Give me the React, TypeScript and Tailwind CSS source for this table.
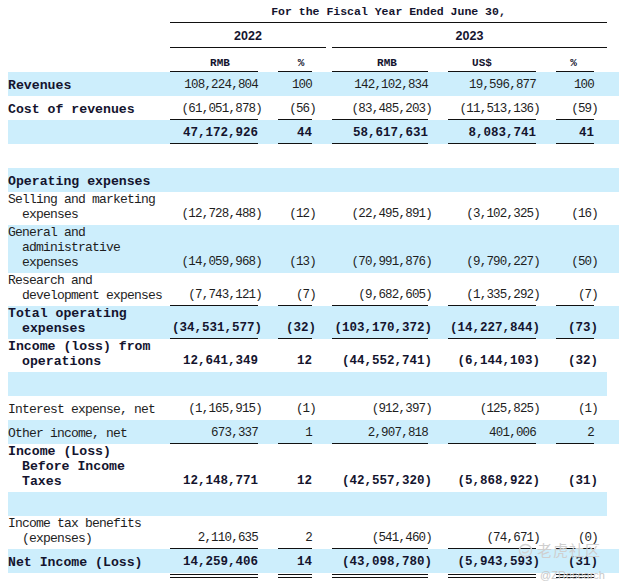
import React from "react";

type Row = {
  label?: string[];
  bold?: boolean;
  boldVals?: boolean;
  bg?: boolean;
  vals?: string[];
  line?: "single" | "double";
  blank?: boolean;
};

const ROWS: Row[] = [
  { label: ["Revenues"], bold: true, bg: true, vals: ["108,224,804", "100", "142,102,834", "19,596,877", "100"] },
  { label: ["Cost of revenues"], bold: true, vals: ["(61,051,878)", "(56)", "(83,485,203)", "(11,513,136)", "(59)"], line: "single" },
  { label: [], bg: true, boldVals: true, vals: ["47,172,926", "44", "58,617,631", "8,083,741", "41"], line: "single" },
  { blank: true },
  { label: ["Operating expenses"], bold: true, bg: true },
  { label: ["Selling and marketing", "expenses"], vals: ["(12,728,488)", "(12)", "(22,495,891)", "(3,102,325)", "(16)"] },
  { label: ["General and", "administrative", "expenses"], bg: true, vals: ["(14,059,968)", "(13)", "(70,991,876)", "(9,790,227)", "(50)"] },
  { label: ["Research and", "development expenses"], vals: ["(7,743,121)", "(7)", "(9,682,605)", "(1,335,292)", "(7)"], line: "single" },
  { label: ["Total operating", "expenses"], bold: true, boldVals: true, bg: true, vals: ["(34,531,577)", "(32)", "(103,170,372)", "(14,227,844)", "(73)"], line: "single" },
  { label: ["Income (loss) from", "operations"], bold: true, boldVals: true, vals: ["12,641,349", "12", "(44,552,741)", "(6,144,103)", "(32)"] },
  { blank: true, bg: true },
  { label: ["Interest expense, net"], vals: ["(1,165,915)", "(1)", "(912,397)", "(125,825)", "(1)"] },
  { label: ["Other income, net"], bg: true, vals: ["673,337", "1", "2,907,818", "401,006", "2"], line: "single" },
  { label: ["Income (Loss)", "Before Income", "Taxes"], bold: true, boldVals: true, vals: ["12,148,771", "12", "(42,557,320)", "(5,868,922)", "(31)"] },
  { blank: true, bg: true },
  { label: ["Income tax benefits", "(expenses)"], vals: ["2,110,635", "2", "(541,460)", "(74,671)", "(0)"], line: "single" },
  { label: ["Net Income (Loss)"], bold: true, boldVals: true, bg: true, vals: ["14,259,406", "14", "(43,098,780)", "(5,943,593)", "(31)"], line: "double" },
];

// value columns sit at grid columns 2, 4, 6, 8, 10
const VAL_COLS = ["col-start-2", "col-start-4", "col-start-6", "col-start-8", "col-start-10"];

function Value({ v, bold, line, col }: { v: string; bold?: boolean; line?: Row["line"]; col: string }) {
  const neg = v.startsWith("(");
  return (
    <div
      className={
        col +
        " row-start-1 flex items-end justify-end pb-[3px] leading-[15px] " +
        (line === "single" ? "shadow-[inset_0_-1px_0_#111]" : "") +
        (line === "double" ? "shadow-[0_1px_0_#fff,0_2px_0_#111,0_4px_0_#fff,0_5px_0_#111]" : "")
      }
    >
      <span
        className={
          (neg ? "-mr-[4px] " : "") +
          (bold
            ? "font-bold text-[12.5px] text-[#14142e]"
            : "text-[12.5px] tracking-[-0.8px] text-[#1e1e1e]")
        }
      >
        {v}
      </span>
    </div>
  );
}

export default function App() {
  return (
    <div className="relative w-[619px] h-[588px] bg-white pl-[8px] overflow-hidden font-['Liberation_Mono',monospace] text-[#222]">
      {/* header */}
      <div className="grid grid-cols-[162px_88px_20px_34px_14px_6px_96px_20px_88px_20px_38px_13px] h-[23px]">
        <div className="col-start-2 col-span-11 flex items-center justify-center shadow-[inset_0_-1px_0_#111] font-bold text-[11.5px] text-[#14142e]">
          For the Fiscal Year Ended June 30,
        </div>
      </div>
      <div className="grid grid-cols-[162px_88px_20px_34px_14px_6px_96px_20px_88px_20px_38px_13px] h-[25px] font-['Liberation_Sans',sans-serif] font-bold text-[12.5px] text-[#14142e]">
        <div className="col-start-2 col-span-4 flex items-end justify-center pb-[4px] leading-[15px] shadow-[inset_0_-1px_0_#111]">2022</div>
        <div className="col-start-7 col-span-6 flex items-end justify-center pb-[4px] leading-[15px] shadow-[inset_0_-1px_0_#111]">2023</div>
      </div>
      <div className="grid grid-cols-[162px_88px_20px_34px_14px_6px_96px_20px_88px_20px_38px_13px] h-[24px] font-bold text-[11px] text-[#14142e] leading-[13px]">
        <div className="col-start-2 flex items-end justify-center pb-[2px] pl-[12px] shadow-[inset_0_-1px_0_#111]">RMB</div>
        <div className="col-start-4 flex items-end justify-center pb-[2px] pl-[12px] shadow-[inset_0_-1px_0_#111]">%</div>
        <div className="col-start-7 flex items-end justify-center pb-[2px] pl-[14px] shadow-[inset_0_-1px_0_#111]">RMB</div>
        <div className="col-start-9 flex items-end justify-center pb-[2px] pr-[20px] shadow-[inset_0_-1px_0_#111]">US$</div>
        <div className="col-start-11 flex items-end justify-center pb-[2px] pr-[3px] shadow-[inset_0_-1px_0_#111]">%</div>
      </div>

      {/* body */}
      {ROWS.map((row, i) => {
        if (row.blank) {
          return <div key={i} className={"h-[24px] w-[599px] " + (row.bg ? "bg-[#cdeefc]" : "")} />;
        }
        return (
          <div
            key={i}
            className={
              "grid grid-cols-[162px_88px_20px_34px_20px_96px_20px_88px_20px_38px_13px] min-h-[24px] " +
              (row.bg ? "bg-[#cdeefc]" : "")
            }
          >
            <div className="col-start-1 row-start-1 flex flex-col justify-end pb-[3px] leading-[15px]">
              {row.label?.map((l, j) => (
                <div
                  key={j}
                  className={
                    (j > 0 ? "pl-[14px] " : "") +
                    (row.bold
                      ? "font-bold text-[13.2px] text-[#14142e]"
                      : "text-[13px] tracking-[-0.8px] text-[#1e1e1e]")
                  }
                >
                  {l}
                </div>
              ))}
            </div>
            {row.vals?.map((v, j) => (
              <Value key={j} v={v} bold={row.boldVals} line={row.line} col={VAL_COLS[j]} />
            ))}
          </div>
        );
      })}

      {/* watermark */}
      <div className="absolute left-[518px] top-[541px] flex items-center gap-[4px] text-[#cfcfcf]">
        <svg width="15" height="15" viewBox="0 0 16 16" fill="none">
          <circle cx="8" cy="8" r="6.5" stroke="#d2d2d2" strokeWidth="1.6" />
          <path d="M5 9.5c1.5 1.5 4.5 1.5 6-1" stroke="#d2d2d2" strokeWidth="1.6" strokeLinecap="round" />
        </svg>
        <span className="font-['Noto_Sans_CJK_SC',sans-serif] text-[15px] leading-[18px] tracking-[1px]">老虎社区</span>
      </div>
      <div className="absolute left-[540px] top-[568px] font-['Liberation_Sans',sans-serif] text-[11px] leading-[14px] text-[#c8c8c8]">
        @ZResearch
      </div>
    </div>
  );
}
